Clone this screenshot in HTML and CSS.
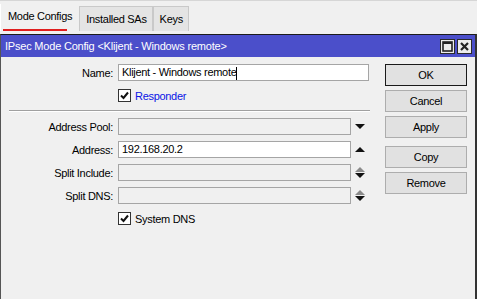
FILE: index.html
```html
<!DOCTYPE html>
<html lang="en">
<head>
    <meta charset="utf-8">
    <title>IPsec Mode Config</title>
    <link rel="stylesheet" href="styles.css">
</head>
<body>
    <div class="tabs">
        <div class="tab active">Mode Configs</div>
        <div class="tab">Installed SAs</div>
        <div class="tab">Keys</div>
    </div>

    <div class="window">
        <div class="titlebar">
            <span class="title">IPsec Mode Config &lt;Klijent - Windows remote&gt;</span>
            <div class="win-btns">
                <span class="win-btn">
                    <svg width="11" height="11" viewBox="0 0 11 11"><rect x="1" y="1" width="9" height="9" fill="none" stroke="#222" stroke-width="1.6"/><line x1="1" y1="2" x2="10" y2="2" stroke="#222" stroke-width="2"/></svg>
                </span>
                <span class="win-btn">
                    <svg width="11" height="11" viewBox="0 0 11 11"><path d="M2 2 L9 9 M9 2 L2 9" stroke="#222" stroke-width="2.2"/></svg>
                </span>
            </div>
        </div>

        <div class="content">
            <div class="form">
                <div class="row">
                    <label class="lbl">Name:</label>
                    <div class="field wide">Klijent - Windows remote<span class="caret"></span></div>
                </div>
                <div class="row check-row">
                    <span class="lbl"></span>
                    <span class="checkbox"><svg width="9" height="9" viewBox="0 0 9 9"><path d="M1 4.5 L3.5 7 L8 1.5" fill="none" stroke="#111" stroke-width="2"/></svg></span>
                    <span class="check-text blue">Responder</span>
                </div>

                <div class="separator"></div>

                <div class="row">
                    <label class="lbl">Address Pool:</label>
                    <div class="field disabled"></div>
                    <span class="arrows"><span class="tri-down"></span></span>
                </div>
                <div class="row">
                    <label class="lbl">Address:</label>
                    <div class="field">192.168.20.2</div>
                    <span class="arrows"><span class="tri-up"></span></span>
                </div>
                <div class="row">
                    <label class="lbl">Split Include:</label>
                    <div class="field disabled"></div>
                    <span class="arrows stacked"><span class="tri-up gray"></span><span class="tri-down"></span></span>
                </div>
                <div class="row">
                    <label class="lbl">Split DNS:</label>
                    <div class="field disabled"></div>
                    <span class="arrows stacked"><span class="tri-up gray"></span><span class="tri-down"></span></span>
                </div>
                <div class="row check-row">
                    <span class="lbl"></span>
                    <span class="checkbox"><svg width="9" height="9" viewBox="0 0 9 9"><path d="M1 4.5 L3.5 7 L8 1.5" fill="none" stroke="#111" stroke-width="2"/></svg></span>
                    <span class="check-text">System DNS</span>
                </div>
            </div>

            <div class="buttons">
                <button class="btn default">OK</button>
                <button class="btn">Cancel</button>
                <button class="btn">Apply</button>
                <button class="btn spaced">Copy</button>
                <button class="btn">Remove</button>
            </div>
        </div>
    </div>
</body>
</html>
```

FILE: styles.css
```css
/* WinBox style dialog */
body {
    margin: 0;
    height: 100vh;
    display: flex;
    flex-direction: column;
    background-color: #f0f0f0;
    font-family: "Liberation Sans", Arial, sans-serif;
    font-size: 11px;
    letter-spacing: -0.3px;
    color: #000;
    overflow: hidden;
}

.tabs {
    display: flex;
    align-items: flex-end;
    height: 31px;
    border-top: 1px solid #d6d6d6;
    box-sizing: border-box;
    flex: none;
}
.tab {
    height: 25px;
    line-height: 24px;
    padding: 0 5px 0 6px;
    background-color: #e4e4e4;
    border: 1px solid #c9c9c9;
    border-bottom: none;
    box-sizing: border-box;
    white-space: nowrap;
}
.tab.active {
    position: relative;
    height: 27px;
    line-height: 25px;
    background-color: #f0f0f0;
    border: none;
    border-left: 1px solid #fff;
    padding: 0 7px 0 7px;
}
.tab.active::after {
    content: "";
    position: absolute;
    left: 2px;
    bottom: 0;
    width: 64px;
    height: 2px;
    background-color: #e01e1e;
}

.window {
    flex: 1;
    margin-top: 3px;
    border-top: 1px solid #1b1b1b;
    border-left: 1px solid #555;
    border-right: 2px solid #333;
}
.titlebar {
    display: flex;
    align-items: center;
    justify-content: space-between;
    height: 22px;
    background-color: #4b4fca;
    color: #fff;
    padding: 0 3px 0 4px;
}
.title {
    font-size: 11px;
    letter-spacing: -0.2px;
}
.win-btns {
    display: flex;
    gap: 2px;
}
.win-btn {
    display: flex;
    align-items: center;
    justify-content: center;
    width: 13px;
    height: 13px;
    background-color: #ececec;
    border: 1px solid #2a2a2a;
}

.content {
    display: flex;
    padding-top: 7px;
}
.form {
    width: 368px;
}
.row {
    display: flex;
    align-items: center;
    height: 17px;
    margin-bottom: 6px;
}
.lbl {
    width: 112px;
    flex: none;
    text-align: right;
    padding-right: 5px;
}
.field {
    width: 233px;
    height: 17px;
    box-sizing: border-box;
    border: 1px solid #a5a5a5;
    background-color: #fff;
    padding-left: 3px;
    line-height: 15px;
    white-space: nowrap;
}
.field.wide {
    width: 251px;
}
.field.disabled {
    background-color: #f0f0f0;
}
.caret {
    display: inline-block;
    width: 1px;
    height: 13px;
    background-color: #000;
    vertical-align: middle;
}

.check-row {
    margin-top: 4px;
}
.checkbox {
    display: flex;
    align-items: center;
    justify-content: center;
    width: 11px;
    height: 11px;
    border: 1px solid #333;
    background-color: #fff;
    margin-right: 4px;
}
.blue {
    color: #0a14e6;
}

.separator {
    margin: 0 0 6px 8px;
    width: 361px;
    border-top: 1px solid #a0a0a0;
    border-bottom: 1px solid #fff;
}

.arrows {
    display: flex;
    flex-direction: column;
    align-items: center;
    justify-content: center;
    gap: 1px;
    width: 18px;
}
.tri-down, .tri-up {
    width: 0;
    height: 0;
    border-left: 5px solid transparent;
    border-right: 5px solid transparent;
}
.tri-down {
    border-top: 5px solid #111;
}
.tri-up {
    border-bottom: 5px solid #111;
}
.tri-up.gray {
    border-bottom-color: #8a8a8a;
}

.buttons {
    display: flex;
    flex-direction: column;
    gap: 4px;
    margin-left: 16px;
}
.btn {
    width: 82px;
    height: 22px;
    font-family: inherit;
    font-size: 11px;
    letter-spacing: -0.3px;
    background-color: #e1e1e1;
    border: 1px solid #adadad;
    padding: 0;
}
.btn.default {
    border-color: #1a1a1a;
}
.btn.spaced {
    margin-top: 4px;
}
```
